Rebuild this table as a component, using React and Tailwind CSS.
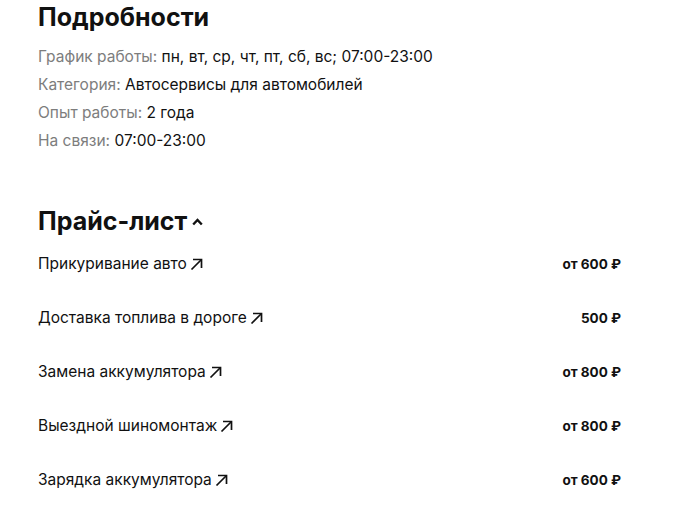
const details = [
  { label: "График работы:", value: "пн, вт, ср, чт, пт, сб, вс; 07:00-23:00" },
  { label: "Категория:", value: "Автосервисы для автомобилей" },
  { label: "Опыт работы:", value: "2 года" },
  { label: "На связи:", value: "07:00-23:00" },
];

const prices = [
  { name: "Прикуривание авто", price: "от 600 ₽" },
  { name: "Доставка топлива в дороге", price: "500 ₽" },
  { name: "Замена аккумулятора", price: "от 800 ₽" },
  { name: "Выездной шиномонтаж", price: "от 800 ₽" },
  { name: "Зарядка аккумулятора", price: "от 600 ₽" },
];

const ArrowIcon = () => (
  <svg width="13" height="13" viewBox="0 0 13 13" fill="none" stroke="currentColor" strokeWidth="1.7">
    <path d="M1.5 11.5 L11.5 1.5" />
    <path d="M3 1.5 H11.5 V10" />
  </svg>
);

const App = () => {
  return (
    <div
      className="min-h-[507px] bg-white text-[#111]"
      style={{ fontFamily: "Inter, 'Noto Sans', sans-serif" }}
    >
      <div className="ml-[38px] w-[583px]">
        <h2 className="text-[25px] font-bold leading-[34px]">Подробности</h2>
        <ul className="mt-[9px]">
          {details.map((item, index) => (
            <li key={index} className="text-[15.5px] leading-[28px]">
              <span className="text-[#7d7d7d]">{item.label}</span> {item.value}
            </li>
          ))}
        </ul>

        {/* Price list */}
        <div className="mt-[50px] flex items-center gap-[5px]">
          <h2 className="text-[25px] font-bold leading-[32px]">Прайс-лист</h2>
          <svg width="11" height="8" viewBox="0 0 11 8" fill="none" stroke="currentColor" strokeWidth="2.4" className="mt-[1px]">
            <path d="M1.2 6.5 L5.5 2 L9.8 6.5" />
          </svg>
        </div>
        <ul>
          {prices.map((item, index) => (
            <li key={index} className="flex h-[54px] items-center justify-between">
              <span className="flex items-center gap-[3px] text-[15.5px]">
                {item.name}
                <ArrowIcon />
              </span>
              <span className="text-[13.5px] font-bold">{item.price}</span>
            </li>
          ))}
        </ul>
      </div>
    </div>
  );
};

export default App;
